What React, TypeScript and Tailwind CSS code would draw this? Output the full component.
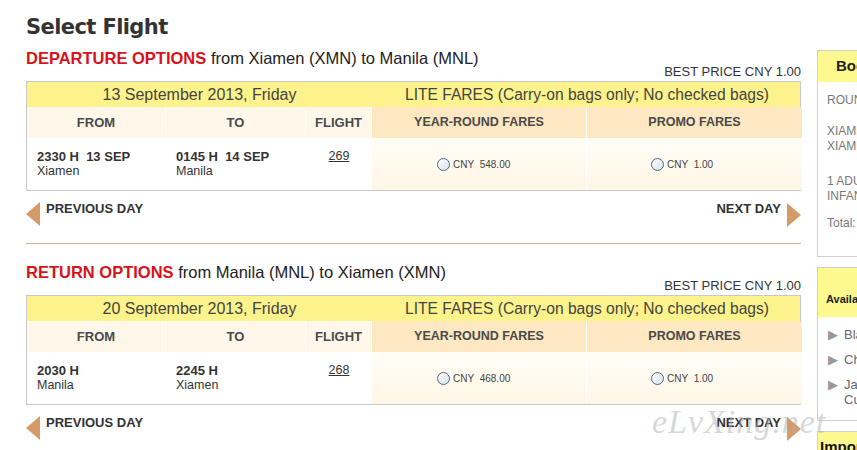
import React from "react";

type Leg = {
  kind: string;
  route: string;
  date: string;
  fromTime: string;
  fromCity: string;
  toTime: string;
  toCity: string;
  flight: string;
  yearRound: string;
  promo: string;
};

const legs: Leg[] = [
  {
    kind: "DEPARTURE OPTIONS",
    route: "from Xiamen (XMN) to Manila (MNL)",
    date: "13 September 2013, Friday",
    fromTime: "2330 H\u00a0\u00a013 SEP",
    fromCity: "Xiamen",
    toTime: "0145 H\u00a0\u00a014 SEP",
    toCity: "Manila",
    flight: "269",
    yearRound: "548.00",
    promo: "1.00",
  },
  {
    kind: "RETURN OPTIONS",
    route: "from Manila (MNL) to Xiamen (XMN)",
    date: "20 September 2013, Friday",
    fromTime: "2030 H",
    fromCity: "Manila",
    toTime: "2245 H",
    toCity: "Xiamen",
    flight: "268",
    yearRound: "468.00",
    promo: "1.00",
  },
];

function Radio({ amount }: { amount: string }) {
  return (
    <div className="flex items-center gap-[3px]">
      <span className="h-[13px] w-[13px] rounded-full border border-[#4d6888] bg-gradient-to-br from-white to-[#d8e0ea]" />
      <span className="text-[10px] text-[#444]">CNY&nbsp;&nbsp;{amount}</span>
    </div>
  );
}

function FlightTable({ leg }: { leg: Leg }) {
  return (
    <div className="border border-[#c8c8c8]">
      <div className="grid h-[25px] grid-cols-[345px_430px] bg-[#fdf38c] text-[16px] text-[#444]">
        <div className="flex items-center justify-center">{leg.date}</div>
        <div className="flex items-center justify-center text-[15.6px]">LITE FARES (Carry-on bags only; No checked bags)</div>
      </div>
      <div className="grid grid-cols-[139px_140px_66px_215px_215px] text-[13px] font-bold text-[#4a4a4a]">
        <div className="flex h-[31px] items-center justify-center border-r border-white bg-[#fff8ea]">FROM</div>
        <div className="flex h-[31px] items-center justify-center border-r border-white bg-[#fff8ea]">TO</div>
        <div className="flex h-[31px] items-center justify-center border-r border-white bg-[#fff8ea]">FLIGHT</div>
        <div className="flex h-[31px] items-center justify-center border-r border-white bg-[#fde8c2] text-[12.5px]">YEAR-ROUND FARES</div>
        <div className="flex h-[31px] items-center justify-center bg-[#fde8c2] text-[12.5px]">PROMO FARES</div>
      </div>
      <div className="grid h-[52px] grid-cols-[139px_140px_66px_215px_215px] text-[12.5px] text-[#333]">
        <div className="flex flex-col pl-[10px] pt-[11px] leading-[15px]">
          <span className="text-[13px] font-bold">{leg.fromTime}</span>
          <span>{leg.fromCity}</span>
        </div>
        <div className="flex flex-col pl-[10px] pt-[11px] leading-[15px]">
          <span className="text-[13px] font-bold">{leg.toTime}</span>
          <span>{leg.toCity}</span>
        </div>
        <div className="flex justify-center pt-[11px] leading-[15px]">
          <span className="underline">{leg.flight}</span>
        </div>
        <div className="flex items-center border-r border-white bg-gradient-to-b from-[#fffdf7] to-[#fff7e6] pl-[65px]">
          <Radio amount={leg.yearRound} />
        </div>
        <div className="flex items-center bg-gradient-to-b from-[#fffdf7] to-[#fff7e6] pl-[64px]">
          <Radio amount={leg.promo} />
        </div>
      </div>
    </div>
  );
}

function DayNav() {
  return (
    <div className="mt-[11px] flex items-start justify-between">
      <div className="flex items-start gap-[6px]">
        <span className="h-0 w-0 border-y-[12px] border-r-[14px] border-y-transparent border-r-[#d59b66]" />
        <span className="text-[13px] font-bold leading-[14px] text-[#333]">PREVIOUS DAY</span>
      </div>
      <div className="flex items-start gap-[6px]">
        <span className="text-[13px] font-bold leading-[14px] text-[#333]">NEXT DAY</span>
        <span className="mt-[1px] h-0 w-0 border-y-[12px] border-l-[14px] border-y-transparent border-l-[#d59b66]" />
      </div>
    </div>
  );
}

function Section({ leg }: { leg: Leg }) {
  return (
    <section>
      <h2 className="text-[16.5px] leading-[19px] text-[#222]">
        <span className="font-bold text-[#d8121b]">{leg.kind}</span> {leg.route}
      </h2>
      <div className="mt-[-3px] text-right text-[13px] leading-[14px] text-[#333]">BEST PRICE CNY 1.00</div>
      <div className="mt-[2px]">
        <FlightTable leg={leg} />
      </div>
      <DayNav />
    </section>
  );
}

function Sidebar() {
  return (
    <aside className="flex w-[160px] shrink-0 flex-col gap-[10px] pt-[50px] text-[12px] text-[#777]">
      <div className="border border-[#cfcfcf]">
        <div className="flex h-[31px] items-center bg-[#fef98e] pl-[18px] text-[15px] font-bold text-[#222]">Booking Summary</div>
        <div className="px-[9px] pb-[25px] pt-[11px] leading-[15px]">
          <p>ROUND TRIP</p>
          <p className="mt-[16px]">XIAMEN</p>
          <p>XIAMEN</p>
          <p className="mt-[20px]">1 ADULT</p>
          <p>INFANT</p>
          <p className="mt-[12px]">Total:</p>
        </div>
      </div>
      <div className="border border-[#cfcfcf]">
        <div className="flex h-[49px] items-end bg-[#fef98e] pb-[10px] pl-[8px] text-[11px] font-bold text-[#222]">Available Offers</div>
        <ul className="px-[10px] pb-[8px] pt-[5px] text-[13px] leading-[15px] text-[#666]">
          <li className="flex gap-[6px] py-[5px]"><span className="text-[#999]">▶</span>Blah</li>
          <li className="flex gap-[6px] py-[5px]"><span className="text-[#999]">▶</span>Chat</li>
          <li className="flex gap-[6px] py-[5px]"><span className="text-[#999]">▶</span>Jan<br />Cu</li>
        </ul>
      </div>
      <div className="border border-[#cfcfcf]">
        <div className="flex h-[31px] items-center bg-[#fef98e] pl-[2px] text-[15px] font-bold text-[#111]">Important</div>
      </div>
    </aside>
  );
}

export default function App() {
  return (
    <div
      className="relative h-[450px] w-[857px] overflow-hidden bg-white"
      style={{ fontFamily: '"Liberation Sans", Arial, sans-serif' }}
    >
      <div className="flex gap-[16px] pl-[26px]">
        <main className="w-[775px] shrink-0">
          <h1
            className="pt-[14px] text-[21px] font-bold leading-[26px] tracking-[-0.6px] text-[#333]"
            style={{ fontFamily: '"DejaVu Sans", Verdana, sans-serif' }}
          >
            Select Flight
          </h1>
          <div className="mt-[9px]">
            <Section leg={legs[0]} />
          </div>
          <div className="mt-[16px] border-t border-[#c9b48c]" />
          <div className="mt-[19px]">
            <Section leg={legs[1]} />
          </div>
        </main>
        <Sidebar />
      </div>
      <span
        className="pointer-events-none absolute left-[652px] top-[396px] text-[34px] italic tracking-[1px] text-[#b0b0b0]/50"
        style={{ fontFamily: '"Liberation Serif", serif' }}
      >
        eLvXing.net
      </span>
    </div>
  );
}
